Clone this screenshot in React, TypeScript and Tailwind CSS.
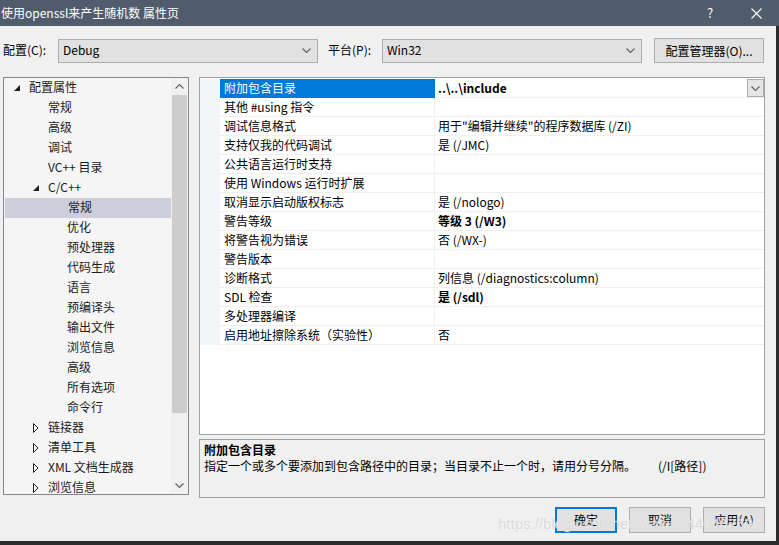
import React from 'react';

type TreeItem = { text: string; level: 0 | 1 | 2; state?: 'open' | 'closed'; selected?: boolean };

const treeItems: TreeItem[] = [
  { text: '配置属性', level: 0, state: 'open' },
  { text: '常规', level: 1 },
  { text: '高级', level: 1 },
  { text: '调试', level: 1 },
  { text: 'VC++ 目录', level: 1 },
  { text: 'C/C++', level: 1, state: 'open' },
  { text: '常规', level: 2, selected: true },
  { text: '优化', level: 2 },
  { text: '预处理器', level: 2 },
  { text: '代码生成', level: 2 },
  { text: '语言', level: 2 },
  { text: '预编译头', level: 2 },
  { text: '输出文件', level: 2 },
  { text: '浏览信息', level: 2 },
  { text: '高级', level: 2 },
  { text: '所有选项', level: 2 },
  { text: '命令行', level: 2 },
  { text: '链接器', level: 1, state: 'closed' },
  { text: '清单工具', level: 1, state: 'closed' },
  { text: 'XML 文档生成器', level: 1, state: 'closed' },
  { text: '浏览信息', level: 1, state: 'closed' },
];

const indent = ['pl-[8px]', 'pl-[27px]', 'pl-[46px]'];

type Prop = { name: string; value: string; bold?: boolean };

const props: Prop[] = [
  { name: '附加包含目录', value: '..\\..\\include', bold: true },
  { name: '其他 #using 指令', value: '' },
  { name: '调试信息格式', value: '用于"编辑并继续"的程序数据库 (/ZI)' },
  { name: '支持仅我的代码调试', value: '是 (/JMC)' },
  { name: '公共语言运行时支持', value: '' },
  { name: '使用 Windows 运行时扩展', value: '' },
  { name: '取消显示启动版权标志', value: '是 (/nologo)' },
  { name: '警告等级', value: '等级 3 (/W3)', bold: true },
  { name: '将警告视为错误', value: '否 (/WX-)' },
  { name: '警告版本', value: '' },
  { name: '诊断格式', value: '列信息 (/diagnostics:column)' },
  { name: 'SDL 检查', value: '是 (/sdl)', bold: true },
  { name: '多处理器编译', value: '' },
  { name: '启用地址擦除系统（实验性）', value: '否' },
];

const Chevron = ({ up = false }: { up?: boolean }) => (
  <svg width="9" height="5" viewBox="0 0 9 5" className={up ? 'rotate-180' : ''}>
    <polyline points="0.5,0.5 4.5,4.5 8.5,0.5" fill="none" stroke="#606060" strokeWidth="1.1" />
  </svg>
);

const Select = ({ value, width }: { value: string; width: string }) => (
  <div className={`${width} h-[24px] bg-[#e1e1e1] border border-[#adadad] flex items-center pl-[4px] pr-[6px]`}>
    <span className="flex-1 text-[#000] pb-[1px]">{value}</span>
    <Chevron />
  </div>
);

const Button = ({ label, primary = false }: { label: string; primary?: boolean }) => (
  <div
    className={`w-[62px] h-[26px] flex items-center justify-center bg-[#e1e1e1] ${
      primary ? 'border-2 border-[#0078d7]' : 'border border-[#adadad]'
    }`}
  >
    {label}
  </div>
);

const TreeRow = ({ item }: { item: TreeItem }) => (
  <div
    className={`h-[20px] shrink-0 flex items-center pb-[2px] ${indent[item.level]} ${
      item.selected ? 'bg-[#cccedb] ml-[1px]' : ''
    }`}
  >
    <div className="w-[17px] h-[18px] flex items-center pl-[2px] pt-[2px]">
      {item.state === 'open' && (
        <svg width="6" height="6" viewBox="0 0 6 6">
          <polygon points="6,0 6,6 0,6" fill="#1e1e1e" />
        </svg>
      )}
      {item.state === 'closed' && (
        <svg width="6" height="10" viewBox="0 0 6 10">
          <polygon points="0.5,0.5 5,5 0.5,9.5" fill="none" stroke="#1e1e1e" strokeWidth="1" />
        </svg>
      )}
    </div>
    <span className="text-[#1b1b1b] whitespace-nowrap">{item.text}</span>
  </div>
);

const GridRow = ({ p, selected }: { p: Prop; selected: boolean }) => (
  <div className="h-[19px] flex shrink-0">
    <div className="w-[20px] bg-[#f3f5f9]" />
    <div
      className={`w-[215px] flex items-center pl-[4px] border-b border-r ${
        selected ? 'bg-[#0078d7] text-white border-[#0078d7]' : 'text-[#000] border-[#f0f0f0]'
      }`}
    >
      <span className="whitespace-nowrap">{p.name}</span>
    </div>
    <div className="flex-1 flex items-center pl-[3px] border-b border-[#f0f0f0]">
      <span className={`flex-1 whitespace-nowrap text-[#000] ${p.bold ? 'font-bold' : ''}`}>{p.value}</span>
      {selected && (
        <div className="w-[17px] h-[18px] bg-[#e5e5e5] border border-[#acacac] flex items-center justify-center">
          <Chevron />
        </div>
      )}
    </div>
  </div>
);

export default function App() {
  return (
    <div className="relative w-[779px] h-[545px] overflow-hidden bg-[#f0f0f0] text-[12px] leading-[16px] font-['Microsoft_YaHei_UI','Noto_Sans_CJK_SC',sans-serif] flex flex-col">
      {/* Title bar */}
      <div className="h-[26px] shrink-0 bg-[#505b6b] flex items-center text-white">
        <span className="pl-[1px] flex-1">使用openssl来产生随机数 属性页</span>
        <div className="w-[46px] h-[26px] flex items-center justify-center text-[13px]">?</div>
        <div className="w-[46px] h-[26px] flex items-center justify-center">
          <svg width="11" height="11" viewBox="0 0 11 11">
            <path d="M0.5 0.5 L10.5 10.5 M10.5 0.5 L0.5 10.5" stroke="#fff" strokeWidth="1.1" />
          </svg>
        </div>
      </div>

      <div className="flex h-[515px] shrink-0">
        <div className="w-[776px] px-[3px] flex flex-col">
          {/* Configuration row */}
          <div className="mt-[12px] h-[25px] flex items-center">
            <span className="w-[55px] pb-[1px]">配置(C):</span>
            <Select value="Debug" width="w-[260px]" />
            <span className="ml-[10px] w-[54px] pb-[1px]">平台(P):</span>
            <Select value="Win32" width="w-[260px]" />
            <div className="ml-[12px] w-[110px] h-[25px] bg-[#e1e1e1] border border-[#adadad] flex items-center justify-center">
              配置管理器(O)...
            </div>
          </div>

          <div className="mt-[14px] flex">
            {/* Tree */}
            <div className="w-[186px] h-[418px] border border-[#828790] bg-[#f5f5f5] flex overflow-hidden">
              <div className="flex-1 flex flex-col overflow-hidden">
                {treeItems.map((it, i) => (
                  <TreeRow key={i} item={it} />
                ))}
              </div>
              <div className="w-[17px] bg-[#f0f0f0] flex flex-col">
                <div className="h-[17px] flex items-center justify-center">
                  <Chevron up />
                </div>
                <div className="h-[318px] mx-[1px] bg-[#cdcdcd]" />
                <div className="flex-1" />
                <div className="h-[17px] flex items-center justify-center">
                  <Chevron />
                </div>
              </div>
            </div>

            {/* Right side */}
            <div className="ml-[10px] w-[566px] flex flex-col">
              <div className="h-[358px] border border-[#a0a0a0] bg-white pt-[1px] flex flex-col">
                {props.map((p, i) => (
                  <GridRow key={i} p={p} selected={i === 0} />
                ))}
              </div>
              <div className="mt-[4px] h-[59px] border border-[#a0a0a0] bg-[#f0f0f0] pl-[4px] pt-[2px] text-[#000]">
                <div className="font-bold">附加包含目录</div>
                <div className="flex whitespace-nowrap">
                  <span>指定一个或多个要添加到包含路径中的目录；当目录不止一个时，请用分号分隔。</span>
                  <span className="ml-[22px]">(/I[路径])</span>
                </div>
              </div>
              <div className="mt-[9px] flex justify-end gap-[12px]">
                <Button label="确定" primary />
                <Button label="取消" />
                <Button label="应用(A)" />
              </div>
            </div>
          </div>
        </div>
        <div className="w-[3px] bg-[#2b2b2b]" />
      </div>
      <div className="flex-1 bg-[#2b2b2b]" />

      {/* Watermark */}
      <div className="absolute left-[498px] top-[514px] text-[15px] leading-[20px] font-['Liberation_Sans',sans-serif] text-[#d0d0d0]/80 [text-shadow:0_0_1px_#ffffff] pointer-events-none">
        https://blog.csdn.net/weixin_44046769
      </div>
    </div>
  );
}
